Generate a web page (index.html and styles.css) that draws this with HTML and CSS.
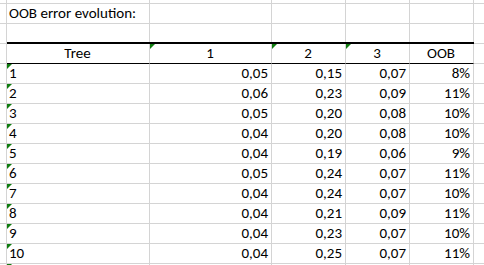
FILE: index.html
```html
<!DOCTYPE html>
<html lang="en">
<head>
<meta charset="utf-8">
<title>OOB error evolution</title>
<link rel="stylesheet" href="styles.css">
</head>
<body>
<div class="sheet">
  <div class="c"></div><div class="c"></div><div class="c"></div><div class="c"></div><div class="c"></div><div class="c"></div><div class="c"></div>

  <div class="c"></div><div class="c">OOB error evolution:</div><div class="c"></div><div class="c"></div><div class="c"></div><div class="c"></div><div class="c"></div>

  <div class="c"></div><div class="c"></div><div class="c"></div><div class="c"></div><div class="c"></div><div class="c"></div><div class="c"></div>

  <div class="c"></div><div class="c hd ctr">Tree</div><div class="c hd ctr flag">1</div><div class="c hd ctr flag">2</div><div class="c hd ctr flag">3</div><div class="c hd ctr">OOB</div><div class="c"></div>

  <div class="c"></div><div class="c flag">1</div><div class="c num">0,05</div><div class="c num">0,15</div><div class="c num">0,07</div><div class="c num">8%</div><div class="c"></div>
  <div class="c"></div><div class="c flag">2</div><div class="c num">0,06</div><div class="c num">0,23</div><div class="c num">0,09</div><div class="c num">11%</div><div class="c"></div>
  <div class="c"></div><div class="c flag">3</div><div class="c num">0,05</div><div class="c num">0,20</div><div class="c num">0,08</div><div class="c num">10%</div><div class="c"></div>
  <div class="c"></div><div class="c flag">4</div><div class="c num">0,04</div><div class="c num">0,20</div><div class="c num">0,08</div><div class="c num">10%</div><div class="c"></div>
  <div class="c"></div><div class="c flag">5</div><div class="c num">0,04</div><div class="c num">0,19</div><div class="c num">0,06</div><div class="c num">9%</div><div class="c"></div>
  <div class="c"></div><div class="c flag">6</div><div class="c num">0,05</div><div class="c num">0,24</div><div class="c num">0,07</div><div class="c num">11%</div><div class="c"></div>
  <div class="c"></div><div class="c flag">7</div><div class="c num">0,04</div><div class="c num">0,24</div><div class="c num">0,07</div><div class="c num">10%</div><div class="c"></div>
  <div class="c"></div><div class="c flag">8</div><div class="c num">0,04</div><div class="c num">0,21</div><div class="c num">0,09</div><div class="c num">11%</div><div class="c"></div>
  <div class="c"></div><div class="c flag">9</div><div class="c num">0,04</div><div class="c num">0,23</div><div class="c num">0,07</div><div class="c num">10%</div><div class="c"></div>
  <div class="c"></div><div class="c flag">10</div><div class="c num">0,04</div><div class="c num">0,25</div><div class="c num">0,07</div><div class="c num">11%</div><div class="c"></div>

  <div class="c"></div><div class="c flag"></div><div class="c"></div><div class="c"></div><div class="c"></div><div class="c"></div><div class="c"></div>
</div>
</body>
</html>
```

FILE: styles.css
```css
html, body {
  margin: 0;
  padding: 0;
  background: #ffffff;
  overflow: hidden;
}

body {
  font-family: Carlito, Lato, "Liberation Sans", sans-serif;
  font-size: 15px;
  color: #000000;
}

.sheet {
  display: grid;
  grid-template-columns: 7px 143px 122px 74px 64px 64px 11px;
  grid-template-rows: 4px repeat(14, 20px);
  height: 265px;
  overflow: hidden;
}

.c {
  position: relative;
  box-sizing: border-box;
  border-right: 1px solid #d4d4d4;
  border-bottom: 1px solid #d4d4d4;
  padding: 0 3px 0 2px;
  line-height: 19px;
  white-space: nowrap;
  background: #ffffff;
}

.num {
  text-align: right;
}

.ctr {
  text-align: center;
}

.hd {
  border-bottom-color: #000000;
  box-shadow: 0 -2px 0 #000000;
}

.flag::before {
  content: "";
  position: absolute;
  top: 0;
  left: 0;
  border-top: 5px solid #107c10;
  border-right: 5px solid transparent;
}
```
